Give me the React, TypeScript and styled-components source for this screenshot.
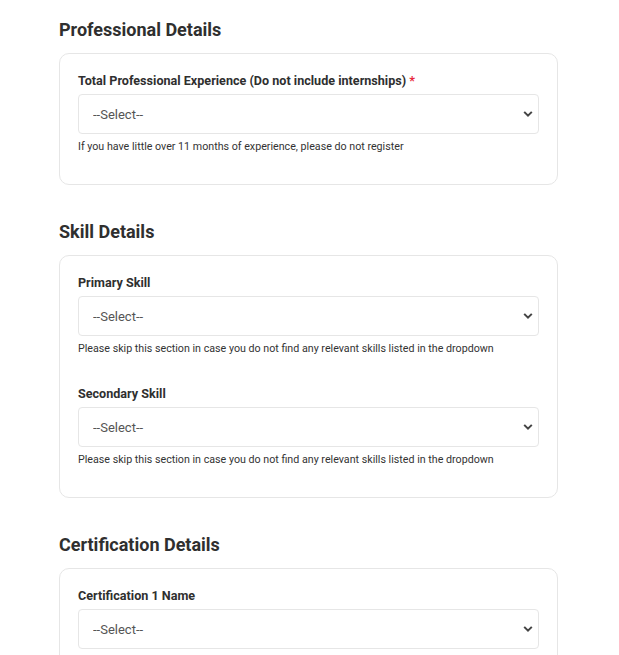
import React from "react";
import styled, { createGlobalStyle } from "styled-components";

const Global = createGlobalStyle`
  html, body { margin: 0; padding: 0; background: #ffffff; }
  body { font-family: Roboto, "Liberation Sans", Arial, sans-serif; color: #333333; }
  * { box-sizing: border-box; }
`;

const Page = styled.div`
  width: 499px;
  margin-left: 59px;
  padding-top: 19px;
  display: flex;
  flex-direction: column;
`;

const Section = styled.section`
  display: flex;
  flex-direction: column;
  margin-bottom: 36px;
`;

const SectionTitle = styled.h2`
  margin: 0 0 13px 0;
  font-size: 18px;
  line-height: 21px;
  font-weight: 700;
  color: #2f2f2f;
`;

const Card = styled.div`
  border: 1px solid #e6e6e6;
  border-radius: 10px;
  padding: 19px 18px 0 18px;
  display: flex;
  flex-direction: column;
`;

const Field = styled.div`
  display: flex;
  flex-direction: column;
  padding-bottom: 30px;
`;

const Label = styled.label`
  font-size: 12.6px;
  line-height: 16px;
  font-weight: 700;
  color: #2f2f2f;
  margin-bottom: 5px;
`;

const Required = styled.span`
  color: #e8283b;
  margin-left: 3px;
`;

const SelectWrap = styled.div`
  position: relative;
  height: 40px;
`;

const Select = styled.select`
  appearance: none;
  -webkit-appearance: none;
  width: 100%;
  height: 40px;
  border: 1px solid #e6e6e6;
  border-radius: 4px;
  background: #ffffff;
  padding: 0 30px 0 14px;
  font-family: Roboto, "Liberation Sans", Arial, sans-serif;
  font-size: 13px;
  color: #555555;
  outline: none;
`;

const Chevron = styled.svg`
  position: absolute;
  right: 6px;
  top: 50%;
  transform: translateY(-50%);
  width: 10px;
  height: 7px;
  pointer-events: none;
`;

const Help = styled.div`
  font-size: 10.7px;
  line-height: 14px;
  color: #333333;
  margin-top: 6px;
`;

type FieldProps = { label: string; required?: boolean; help?: string };

const SelectField: React.FC<FieldProps> = ({ label, required, help }) => (
  <Field>
    <Label>
      {label}
      {required && <Required>*</Required>}
    </Label>
    <SelectWrap>
      <Select defaultValue="">
        <option value="">--Select--</option>
      </Select>
      <Chevron viewBox="0 0 10 7" aria-hidden="true">
        <path d="M1.2 1.4 L5 5.2 L8.8 1.4" fill="none" stroke="#444" strokeWidth="2" strokeLinecap="butt" strokeLinejoin="miter" />
      </Chevron>
    </SelectWrap>
    {help && <Help>{help}</Help>}
  </Field>
);

const skillHelp = "Please skip this section in case you do not find any relevant skills listed in the dropdown";

export default function App() {
  return (
    <>
      <Global />
      <Page>
        <Section>
          <SectionTitle>Professional Details</SectionTitle>
          <Card>
            <SelectField
              label="Total Professional Experience (Do not include internships)"
              required
              help="If you have little over 11 months of experience, please do not register"
            />
          </Card>
        </Section>
        <Section>
          <SectionTitle>Skill Details</SectionTitle>
          <Card>
            <SelectField label="Primary Skill" help={skillHelp} />
            <SelectField label="Secondary Skill" help={skillHelp} />
          </Card>
        </Section>
        <Section>
          <SectionTitle>Certification Details</SectionTitle>
          <Card>
            <SelectField label="Certification 1 Name" />
          </Card>
        </Section>
      </Page>
    </>
  );
}
